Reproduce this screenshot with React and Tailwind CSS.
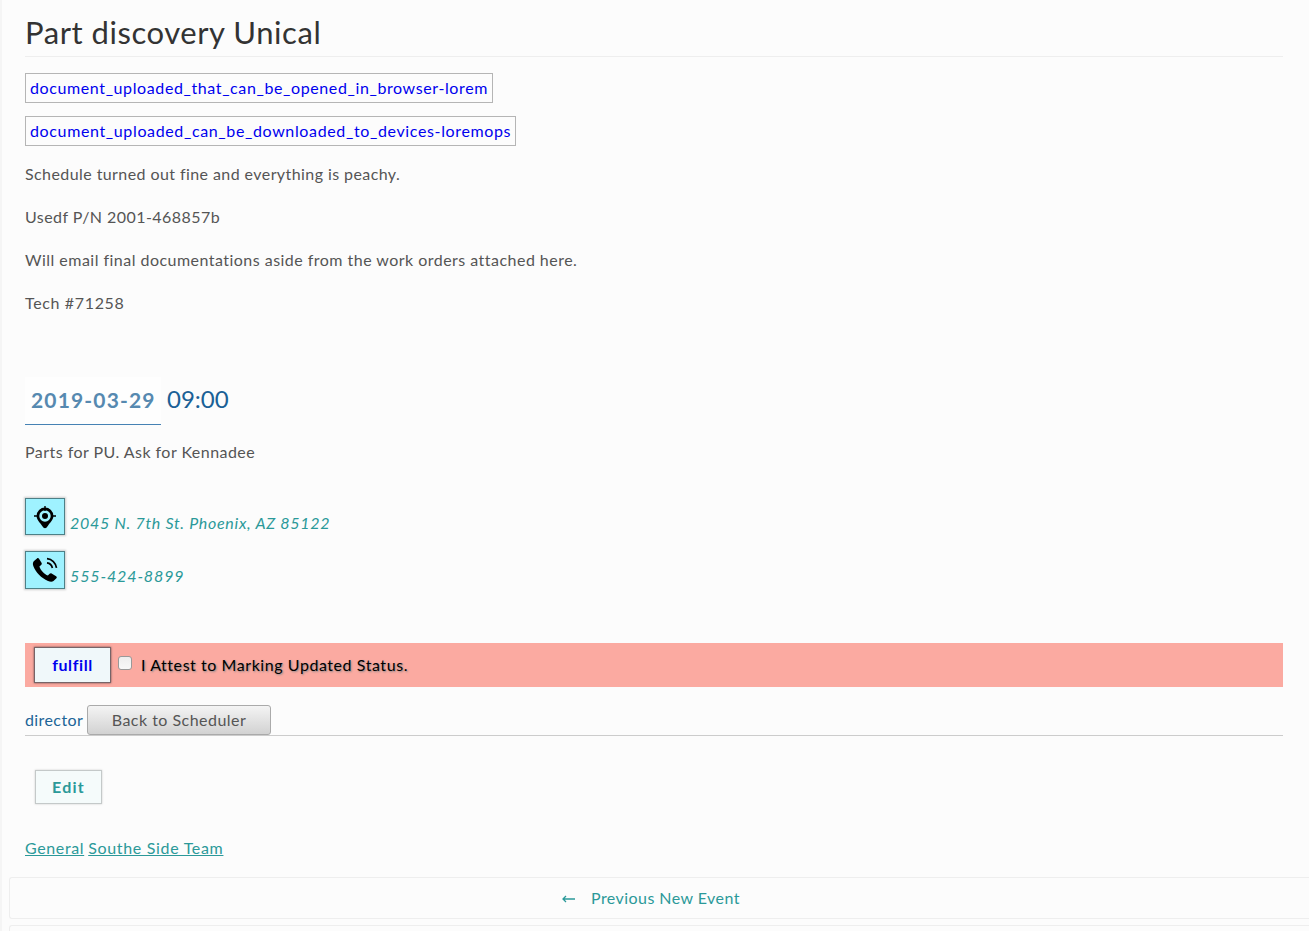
function PinIcon() {
  return (
    <svg width="24" height="24" viewBox="0 0 24 24" fill="none">
      <path d="M12 1v5M1 11h5M18 11h5" stroke="#000" strokeWidth="1.400" />
      <path
        fill="#000"
        fillRule="evenodd"
        d="M12 2.600a8.400 8.400 0 0 0-8.400 8.400c0 4.200 3.600 6.600 5.600 10q1.400 2.300 2.800 2.300t2.800-2.300c2-3.400 5.600-5.800 5.600-10A8.400 8.400 0 0 0 12 2.600Zm0 2.700a5.700 5.700 0 1 1 0 11.400 5.700 5.700 0 0 1 0-11.400Z"
      />
      <circle cx="12" cy="11" r="3" fill="#000" />
    </svg>
  );
}

function PhoneIcon() {
  return (
    <svg width="26" height="26" viewBox="0 0 26 26" fill="none">
      <path
        fill="#000"
        d="M2 4 5 1.400c.8-.6 1.500-.5 2 .3l2.500 4.100c.5.8.3 1.500-.4 2.100L7.400 9.500c1 3.600 4.700 7.600 8.500 9.100l1.700-1.800c.6-.7 1.300-.8 2-.3l4.500 2.800c.8.6.9 1.200.3 1.900L21.500 24c-1.400 1.200-3.500.9-5.500 0C9.500 21.300 3.500 15 1.300 9 .6 7 .8 5.100 2 4Z"
      />
      <path d="M15 1.600c5 .5 8.800 4.300 9.500 9.300M15 5.800c3 .4 4.800 2.300 5.400 5.200" stroke="#000" strokeWidth="1.700" />
    </svg>
  );
}

function DocumentLink({ children, className }) {
  return (
    <div className="mb-[13px] flex">
      <a href="#" className={`flex h-[30px] items-center whitespace-nowrap border border-[#b5b5b5] pb-0.5 pl-1 text-[#0000ee] ${className}`}>
        {children}
      </a>
    </div>
  );
}

export default function App() {
  return (
    <div className="h-[931px] overflow-hidden border-l-2 border-[#f5f5f5] bg-[#fcfcfc] font-['Lato',sans-serif] text-[16px] leading-[25px] text-[#555]">
      <main className="ml-[23px] mr-[26px] flex flex-col whitespace-nowrap">
        <h1 className="mb-4 h-[57px] border-b border-[#eee] pt-[12px] text-[31px] leading-[40px] tracking-[0.55px] text-[#333]">
          Part discovery Unical
        </h1>
        <DocumentLink className="w-[468px] tracking-[0.61px]">document_uploaded_that_can_be_opened_in_browser-lorem</DocumentLink>
        <DocumentLink className="w-[491px] tracking-[0.635px]">document_uploaded_can_be_downloaded_to_devices-loremops</DocumentLink>
        <p className="mt-[2px] tracking-[0.42px]">Schedule turned out fine and everything is peachy.</p>
        <p className="mt-[18px] tracking-[0.45px]">Usedf P/N 2001-468857b</p>
        <p className="mt-[18px] tracking-[0.47px]">Will email final documentations aside from the work orders attached here.</p>
        <p className="mt-[18px] tracking-[0.65px]">Tech #71258</p>
        <div className="mt-[62px] flex h-[48px] gap-1.5">
          <time className="w-[136px] border-b border-[#4682b4] bg-[#fefefe] pl-1.5 text-[21px] font-bold leading-[45px] tracking-[1.15px] text-[#5689b0]">
            2019-03-29
          </time>
          <span className="text-[24px] leading-[44px] text-[#1a6096]">09:00</span>
        </div>
        <p className="mt-[14px] tracking-[0.46px]">Parts for PU. Ask for Kennadee</p>
        <div className="mt-[34px] flex h-[37px] items-end gap-[5px]">
          <span className="flex h-[37px] w-10 items-center justify-center border border-[#4d8087] bg-[#9ff2ff] shadow-[0_0_2px_1px_#ccc]">
            <PinIcon />
          </span>
          <a href="#" className="italic tracking-[0.71px] text-[#2b9999]">2045 N. 7th St. Phoenix, AZ 85122</a>
        </div>
        <div className="mt-4 flex h-[38px] items-end gap-[5px]">
          <span className="flex h-[38px] w-10 items-center justify-center border border-[#4d8087] bg-[#9ff2ff] shadow-[0_0_2px_1px_#ccc]">
            <PhoneIcon />
          </span>
          <a href="#" className="mb-px italic tracking-[0.87px] text-[#2b9999]">555-424-8899</a>
        </div>
        <div className="mt-[54px] flex h-[44px] bg-[#fbaaa1] pl-[9px] pt-1">
          <button className="flex h-[36px] w-[77px] items-center justify-center border border-[#776468] bg-[#f0f8fa] pb-px font-bold tracking-[0.6px] text-[#0000ee] shadow-[0_0_2px_#66484a]">
            fulfill
          </button>
          <input
            type="checkbox"
            aria-label="Attest"
            className="ml-[7px] mt-[9px] h-[14px] w-[14px] appearance-none rounded-[3px] border border-[#999] bg-linear-to-b from-[#eee] to-[#f8f8f8]"
          />
          <span className="ml-[9px] mt-[5px] tracking-[0.56px] text-black [text-shadow:1px_1px_2px_#888]">
            I Attest to Marking Updated Status.
          </span>
        </div>
        <div className="mt-[18px] flex h-[31px] border-b border-[#ccc]">
          <span className="w-[62px] leading-[29px] tracking-[0.4px] text-[#206497]">director</span>
          <button className="flex h-[30px] w-[184px] items-center justify-center rounded-[3px] border border-[#aaa] bg-linear-to-b from-[#f4f4f4] to-[#d2d2d2] pb-0.5 tracking-[0.47px]">
            Back to Scheduler
          </button>
        </div>
        <button className="ml-[10px] mt-[34px] flex h-[34px] w-[67px] items-center justify-center border border-[#c4c9c9] bg-[#f5fbfb] pb-0.5 font-bold tracking-[1.2px] text-[#2b9999] shadow-[0_0_2px_#ccc]">
          Edit
        </button>
        <div className="mt-[31px] flex gap-1 text-[#2b9999]">
          <a href="#" className="tracking-[0.62px] underline">General</a>
          <a href="#" className="tracking-[0.68px] underline">Southe Side Team</a>
        </div>
      </main>
      <nav className="ml-[7px] mt-[17px] flex h-[42px] items-center rounded-l-[3px] border border-r-0 border-[#eee] pl-[552px] text-[#2b9999]">
        <svg width="14" height="10" viewBox="0 0 14 10" fill="none" stroke="currentColor" strokeWidth="1.300" className="mt-px">
          <path d="M1 5h12M4 2 1 5l3 3" />
        </svg>
        <a href="#" className="ml-[15px] whitespace-nowrap pb-0.5 tracking-[0.44px]">Previous New Event</a>
      </nav>
      <div className="ml-[7px] mt-[6px] h-[42px] rounded-l-[3px] border border-r-0 border-[#eee]" />
    </div>
  );
}
